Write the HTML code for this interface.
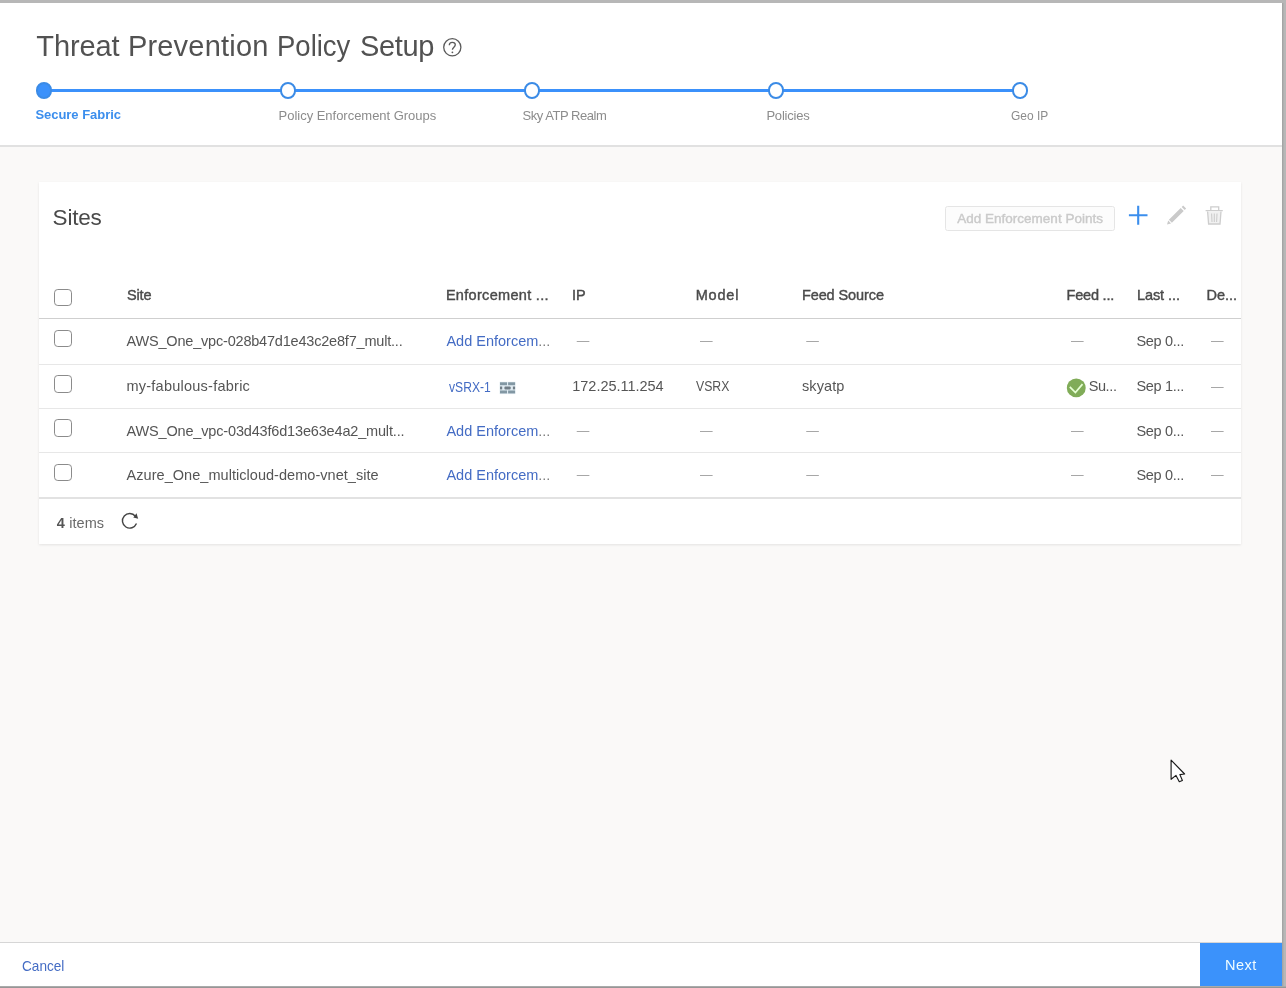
<!DOCTYPE html>
<html lang="en">
<head>
<meta charset="utf-8">
<title>Threat Prevention Policy Setup</title>
<style>
*{box-sizing:border-box;margin:0;padding:0}
html,body{width:1286px;height:988px;overflow:hidden}
body{position:relative;background:#b7b7b7;font-family:"Liberation Sans",sans-serif;color:#555;font-size:14px}
h1,h2{font-weight:normal;font-size:inherit}
.g{position:absolute;left:0;top:0;width:1286px;height:988px;will-change:transform}
.t{position:absolute;white-space:nowrap}
.d{font-size:12.6px;line-height:20px;color:#9c9c9c;letter-spacing:0}
.p{position:absolute}
#edge-r{left:1282px;top:3px;width:2px;height:983px;background:linear-gradient(to right,#9f9f9f,#b5b5b5)}
#edge-b{left:0;top:986px;width:1286px;height:2px;background:linear-gradient(#b4b4b4,#8c8c8c)}
#win{left:0;top:3px;width:1282px;height:983px;background:#faf9f8}
#hdr{left:0;top:3px;width:1282px;height:144px;background:#fff;border-bottom:2px solid #e1e1e1}
#line{left:44px;top:88.5px;width:976px;height:3.9px;background:#3b91fb}
.dot{position:absolute;top:82.3px;width:16.8px;height:16.8px;border-radius:50%;border:2.3px solid #3b8be6;background:#fff}
.dot.on{background:#3b91fb}
#card{left:39px;top:181.5px;width:1202px;height:362.6px;background:#fff;box-shadow:0 1px 2.5px rgba(0,0,0,.09)}
#aep{left:944.6px;top:206.2px;width:170.4px;height:25.3px;border:1.2px solid #e5e5e5;border-radius:2.5px;background:#fcfcfc}
.hl{position:absolute;left:39px;width:1202px;height:1px;background:#e7e7e7}
.cb{position:absolute;left:54.2px;width:17.6px;height:17.6px;border:1.8px solid #8b8b8b;border-radius:3.8px;background:#fff}
#ftr{left:0;top:942px;width:1282px;height:44px;background:#fff;border-top:1px solid #d6d6d6}
#next{left:1200px;top:943px;width:82px;height:43px;background:#3b92fb}
</style>
</head>
<body>
<div id="edge-r" class="p"></div>
<div id="edge-b" class="p"></div>
<div id="win" class="p"></div>

<!-- wizard header: title + step indicator -->
<div id="hdr" class="p"></div>
<header class="g">
<h1><span id="title1" class="t" style="left:36.30px;top:26.15px;font-size:29px;line-height:41px;font-weight:normal;color:#525252;letter-spacing:-0.100px">Threat</span> <span id="title2" class="t" style="left:127.90px;top:26.15px;font-size:29px;line-height:41px;font-weight:normal;color:#525252;letter-spacing:0.200px">Prevention</span> <span id="title3" class="t" style="left:276.70px;top:26.15px;font-size:29px;line-height:41px;font-weight:normal;color:#525252;letter-spacing:0.000px;transform:scaleX(0.9480);transform-origin:0 0">Policy</span> <span id="title4" class="t" style="left:359.90px;top:26.15px;font-size:29px;line-height:41px;font-weight:normal;color:#525252;letter-spacing:-0.325px">Setup</span></h1>
<svg class="p" style="left:442px;top:37px" width="21" height="21" viewBox="0 0 21 21"><circle cx="10.3" cy="10.3" r="8.6" fill="none" stroke="#5a5a5a" stroke-width="1.3"/><path d="M7.3 8.2c0-1.8 1.3-2.9 3-2.9s3 1 3 2.5c0 2.2-2.9 2.6-2.9 5" fill="none" stroke="#5a5a5a" stroke-width="1.3"/><circle cx="10.4" cy="15.3" r="0.9" fill="#5a5a5a"/></svg>
<nav>
<div id="line" class="p"></div>
<div class="dot on" style="left:35.6px"></div>
<div class="dot" style="left:279.6px"></div>
<div class="dot" style="left:523.6px"></div>
<div class="dot" style="left:767.6px"></div>
<div class="dot" style="left:1011.6px"></div>
<div id="s1" class="t" style="left:35.40px;top:106.10px;font-size:13px;line-height:18px;font-weight:bold;color:#3b8eed;letter-spacing:-0.033px">Secure Fabric</div>
<div id="s2" class="t" style="left:278.60px;top:106.70px;font-size:13px;line-height:18px;font-weight:normal;color:#8c8c8c;letter-spacing:-0.025px">Policy Enforcement Groups</div>
<div id="s3" class="t" style="left:522.60px;top:106.70px;font-size:13px;line-height:18px;font-weight:normal;color:#8c8c8c;letter-spacing:-0.467px">Sky ATP Realm</div>
<div id="s4" class="t" style="left:766.40px;top:106.70px;font-size:13px;line-height:18px;font-weight:normal;color:#8c8c8c;letter-spacing:-0.200px">Policies</div>
<div id="s5" class="t" style="left:1011.20px;top:106.70px;font-size:13px;line-height:18px;font-weight:normal;color:#8c8c8c;letter-spacing:0.000px;transform:scaleX(0.9200);transform-origin:0 0">Geo IP</div>
</nav>
</header>

<!-- sites grid card -->
<div id="card" class="p"></div>
<main class="g">
<h2 id="sites" class="t" style="left:52.60px;top:201.70px;font-size:22.5px;line-height:31px;font-weight:normal;color:#4a4a4a;letter-spacing:-0.225px">Sites</h2>
<div class="toolbar">
<div id="aep" class="p"></div>
<div id="aept" class="t" style="left:957.20px;top:209.12px;font-size:13.5px;line-height:19px;font-weight:normal;color:#cacaca;letter-spacing:0.010px;-webkit-text-stroke:0.4px #cacaca">Add Enforcement Points</div>
<svg class="p" style="left:1126px;top:203px" width="24" height="24" viewBox="1126 203 24 24"><path d="M1128.9 215.3H1147.5M1138.2 205.8V224.7" stroke="#3b8eed" stroke-width="2.1" fill="none"/></svg>
<svg class="p" style="left:1164px;top:203px" width="24" height="24" viewBox="1164 203 24 24"><path d="M1167 224.6L1168.2 220.6 1171 223.4z M1168.9 219.7L1180.7 207.9 1183.7 210.9 1171.9 222.7z M1181.7 206.9L1183.1 205.5 1186.1 208.5 1184.7 209.9z" fill="#cacaca"/></svg>
<svg class="p" style="left:1203px;top:203px" width="24" height="24" viewBox="1203 203 24 24"><g fill="none" stroke="#cdcdcd" stroke-width="1.3"><path d="M1205.6 210.6H1222.8M1210.8 210.3V206.9H1218.7V210.3"/><path d="M1207.6 211.5l1 12.5h11.4l1-12.5" fill="#f1f1f1"/><path d="M1211.6 213.5l.4 8.5M1214.3 213.5V222M1217 213.5l-.4 8.5" stroke-width="1.1"/></g></svg>
</div>
<div class="thead">
<div class="cb" style="top:288.7px"></div>
<div id="h1" class="t" style="left:126.90px;top:285.38px;font-size:14.5px;line-height:20px;font-weight:normal;color:#4a4a4a;letter-spacing:-0.133px;-webkit-text-stroke:0.4px #4a4a4a">Site</div>
<div id="h2" class="t" style="left:445.90px;top:285.38px;font-size:14.5px;line-height:20px;font-weight:normal;color:#4a4a4a;letter-spacing:0.307px;-webkit-text-stroke:0.4px #4a4a4a">Enforcement ...</div>
<div id="h3" class="t" style="left:572.10px;top:285.38px;font-size:14.5px;line-height:20px;font-weight:normal;color:#4a4a4a;letter-spacing:-0.100px;-webkit-text-stroke:0.4px #4a4a4a">IP</div>
<div id="h4" class="t" style="left:695.70px;top:285.38px;font-size:14.5px;line-height:20px;font-weight:normal;color:#4a4a4a;letter-spacing:0.825px;-webkit-text-stroke:0.4px #4a4a4a">Model</div>
<div id="h5" class="t" style="left:801.90px;top:285.38px;font-size:14.5px;line-height:20px;font-weight:normal;color:#4a4a4a;letter-spacing:-0.090px;-webkit-text-stroke:0.4px #4a4a4a">Feed Source</div>
<div id="h6" class="t" style="left:1066.60px;top:285.38px;font-size:14.5px;line-height:20px;font-weight:normal;color:#4a4a4a;letter-spacing:-0.214px;-webkit-text-stroke:0.4px #4a4a4a">Feed ...</div>
<div id="h7" class="t" style="left:1136.90px;top:285.38px;font-size:14.5px;line-height:20px;font-weight:normal;color:#4a4a4a;letter-spacing:-0.071px;-webkit-text-stroke:0.4px #4a4a4a">Last ...</div>
<div id="h8" class="t" style="left:1206.50px;top:285.38px;font-size:14.5px;line-height:20px;font-weight:normal;color:#4a4a4a;letter-spacing:-0.050px;-webkit-text-stroke:0.4px #4a4a4a">De...</div>
<div class="hl" style="top:318px;background:#cfcfcf"></div>
</div>
<div class="row">
<div class="cb" style="top:329.7px"></div>
<div id="r1a" class="t" style="left:126.60px;top:331.28px;font-size:14.5px;line-height:20px;font-weight:normal;color:#555;letter-spacing:-0.197px">AWS_One_vpc-028b47d1e43c2e8f7_mult...</div>
<div id="r1b" class="t" style="left:446.40px;top:331.28px;font-size:14.5px;line-height:20px;font-weight:normal;color:#446cc4;letter-spacing:0.000px">Add Enforcem<span style="color:#7d7d7d">...</span></div>
<div id="r1g" class="t" style="left:1136.40px;top:331.28px;font-size:14.5px;line-height:20px;font-weight:normal;color:#555;letter-spacing:-0.286px">Sep 0...</div>
<div class="t d" style="left:576.8px;top:331.1px">—</div>
<div class="t d" style="left:700.0px;top:331.1px">—</div>
<div class="t d" style="left:806.2px;top:331.1px">—</div>
<div class="t d" style="left:1071.0px;top:331.1px">—</div>
<div class="t d" style="left:1211.0px;top:331.1px">—</div>
<div class="hl" style="top:363.6px"></div>
</div>
<div class="row">
<div class="cb" style="top:375px"></div>
<svg class="p" style="left:499px;top:381px" width="18" height="14" viewBox="499 381 18 14"><rect x="499.6" y="381.8" width="15.8" height="12.3" fill="#dfeaf1"/><g fill="#8297a3"><rect x="500" y="382.3" width="7" height="2.9"/><rect x="508.1" y="382.3" width="7" height="2.9"/><rect x="500" y="390.5" width="7" height="2.9"/><rect x="508.1" y="390.5" width="7" height="2.9"/></g><g fill="#717d86"><rect x="500" y="386.5" width="2.2" height="2.9"/><rect x="504.4" y="386.5" width="6.3" height="2.9" rx="1"/><rect x="512.9" y="386.5" width="2.2" height="2.9"/></g></svg>
<svg class="p" style="left:1065px;top:377px" width="23" height="23" viewBox="1065 377 23 23"><circle cx="1076.25" cy="387.9" r="9.45" fill="#80ac58"/><path d="M1069.8 386.8l5.6 5.8 7.1-8.5" fill="none" stroke="#e6ffd4" stroke-width="1.7"/></svg>
<div id="r2a" class="t" style="left:126.40px;top:376.38px;font-size:14.5px;line-height:20px;font-weight:normal;color:#555;letter-spacing:0.247px">my-fabulous-fabric</div>
<div id="r2b" class="t" style="left:448.50px;top:377.48px;font-size:14.5px;line-height:20px;font-weight:normal;color:#446cc4;letter-spacing:0.000px;transform:scaleX(0.8360);transform-origin:0 0">vSRX-1</div>
<div id="r2c" class="t" style="left:572.30px;top:376.38px;font-size:14.5px;line-height:20px;font-weight:normal;color:#555;letter-spacing:-0.033px">172.25.11.254</div>
<div id="r2d" class="t" style="left:696.20px;top:376.38px;font-size:14.5px;line-height:20px;font-weight:normal;color:#555;letter-spacing:0.000px;transform:scaleX(0.8436);transform-origin:0 0">VSRX</div>
<div id="r2e" class="t" style="left:802.00px;top:376.38px;font-size:14.5px;line-height:20px;font-weight:normal;color:#555;letter-spacing:0.100px">skyatp</div>
<div id="r2f" class="t" style="left:1088.70px;top:376.38px;font-size:14.5px;line-height:20px;font-weight:normal;color:#555;letter-spacing:-0.400px">Su...</div>
<div id="r2g" class="t" style="left:1136.40px;top:376.38px;font-size:14.5px;line-height:20px;font-weight:normal;color:#555;letter-spacing:-0.286px">Sep 1...</div>
<div class="t d" style="left:1211.0px;top:376.5px">—</div>
<div class="hl" style="top:408px"></div>
</div>
<div class="row">
<div class="cb" style="top:419.3px"></div>
<div id="r3a" class="t" style="left:126.60px;top:420.78px;font-size:14.5px;line-height:20px;font-weight:normal;color:#555;letter-spacing:-0.169px">AWS_One_vpc-03d43f6d13e63e4a2_mult...</div>
<div id="r3b" class="t" style="left:446.40px;top:420.78px;font-size:14.5px;line-height:20px;font-weight:normal;color:#446cc4;letter-spacing:0.000px">Add Enforcem<span style="color:#7d7d7d">...</span></div>
<div id="r3g" class="t" style="left:1136.40px;top:420.78px;font-size:14.5px;line-height:20px;font-weight:normal;color:#555;letter-spacing:-0.286px">Sep 0...</div>
<div class="t d" style="left:576.8px;top:421.0px">—</div>
<div class="t d" style="left:700.0px;top:421.0px">—</div>
<div class="t d" style="left:806.2px;top:421.0px">—</div>
<div class="t d" style="left:1071.0px;top:421.0px">—</div>
<div class="t d" style="left:1211.0px;top:421.0px">—</div>
<div class="hl" style="top:452.2px"></div>
</div>
<div class="row">
<div class="cb" style="top:463.6px"></div>
<div id="r4a" class="t" style="left:126.60px;top:465.18px;font-size:14.5px;line-height:20px;font-weight:normal;color:#555;letter-spacing:0.041px">Azure_One_multicloud-demo-vnet_site</div>
<div id="r4b" class="t" style="left:446.40px;top:465.18px;font-size:14.5px;line-height:20px;font-weight:normal;color:#446cc4;letter-spacing:0.000px">Add Enforcem<span style="color:#7d7d7d">...</span></div>
<div id="r4g" class="t" style="left:1136.40px;top:465.18px;font-size:14.5px;line-height:20px;font-weight:normal;color:#555;letter-spacing:-0.286px">Sep 0...</div>
<div class="t d" style="left:576.8px;top:465.4px">—</div>
<div class="t d" style="left:700.0px;top:465.4px">—</div>
<div class="t d" style="left:806.2px;top:465.4px">—</div>
<div class="t d" style="left:1071.0px;top:465.4px">—</div>
<div class="t d" style="left:1211.0px;top:465.4px">—</div>
<div class="hl" style="top:496.8px;background:#e2e2e2;height:2px"></div>
</div>
<div class="gridfoot">
<div id="cnt" class="t" style="left:56.80px;top:512.78px;font-size:14.5px;line-height:20px;font-weight:bold;color:#555;letter-spacing:0.000px">4</div>
<div id="items" class="t" style="left:69.20px;top:512.78px;font-size:14.5px;line-height:20px;font-weight:normal;color:#6a6a6a;letter-spacing:0.050px">items</div>
<svg class="p" style="left:119px;top:510px" width="22" height="22" viewBox="119 510 22 22"><path d="M135.4 516.2A7.3 7.3 0 1 0 136.5 523.6" fill="none" stroke="#444" stroke-width="1.4"/><path d="M136.5 513.2l-3.2 4.2 4.9 1.4z" fill="#444"/></svg>
</div>
</main>

<!-- wizard footer -->
<div id="ftr" class="p"></div>
<div id="next" class="p"></div>
<footer class="g">
<div id="cancel" class="t" style="left:22.30px;top:955.98px;font-size:14.5px;line-height:20px;font-weight:normal;color:#446cc4;letter-spacing:0.000px;transform:scaleX(0.9378);transform-origin:0 0">Cancel</div>
<div id="nextt" class="t" style="left:1225.00px;top:955.18px;font-size:14.5px;line-height:20px;font-weight:normal;color:#f0fdff;letter-spacing:0.467px">Next</div>
</footer>

<!-- mouse pointer captured in the screenshot -->
<svg class="p" style="left:1166px;top:756px" width="24" height="30" viewBox="1166 756 24 30"><path d="M1171.1 760.2V779.3L1176 775.4 1179.3 781.7 1182.4 780.5 1179.9 774.6 1184.6 774z" fill="#fff" stroke="#1a1a1a" stroke-width="1.15" stroke-linejoin="round"/></svg>
</body>
</html>
